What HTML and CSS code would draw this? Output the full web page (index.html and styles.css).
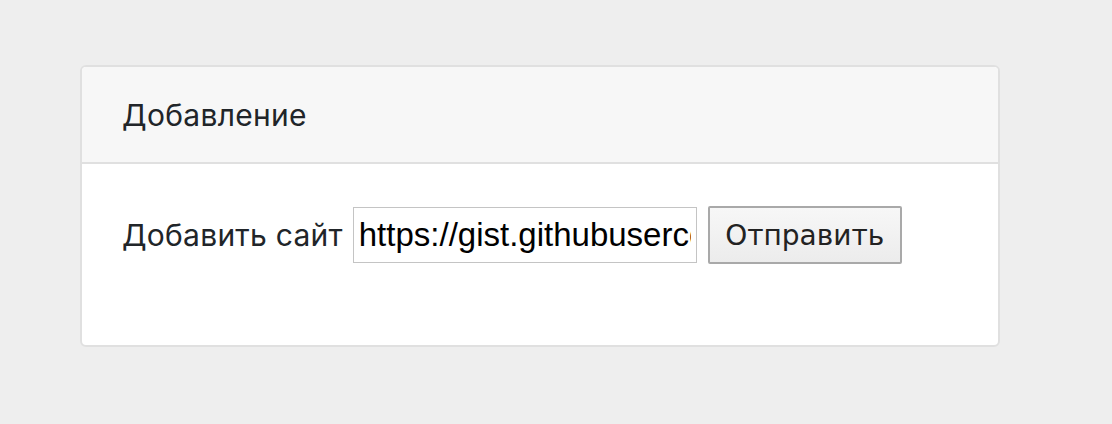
FILE: index.html
```html
<!DOCTYPE html>
<html lang="ru">
<head>
<meta charset="utf-8">
<link rel="stylesheet" href="styles.css">
</head>
<body>
<div class="page">
  <div class="card">
    <div class="card-header">Добавление</div>
    <div class="card-body">
      <form class="add-form">
        <label class="label" for="site">Добавить сайт</label>
        <input class="site-input" id="site" type="text" value="https://gist.githubusercontent.com/">
        <button class="submit" type="button">Отправить</button>
      </form>
    </div>
  </div>
</div>
</body>
</html>
```
FILE: styles.css
```css
html, body {
  margin: 0;
  padding: 0;
  background: #eeeeee;
}
.page {
  padding: 65px 0 0 80px;
}
.card {
  width: 920px;
  height: 282px;
  box-sizing: border-box;
  background: #fff;
  border: 2px solid #e0e0e0;
  border-radius: 6px;
  overflow: hidden;
  font-family: Inter, "Noto Sans", sans-serif;
  color: #212529;
}
.card-header {
  height: 97px;
  box-sizing: border-box;
  background: #f7f7f7;
  border-bottom: 2px solid #e0e0e0;
  padding: 0 0 0 40px;
  display: flex;
  align-items: center;
  font-size: 30px;
  letter-spacing: 0.3px;
}
.card-body {
  padding: 42px 40px;
}
.add-form {
  display: flex;
  align-items: center;
}
.label {
  font-size: 30px;
  letter-spacing: 0.25px;
  margin-right: 10px;
}
.site-input {
  width: 344px;
  height: 56px;
  box-sizing: border-box;
  border: 1px solid #c4c4c4;
  padding: 0 5px;
  font-family: "Liberation Sans", Arial, sans-serif;
  font-size: 33px;
  color: #000;
  outline: none;
  margin: 0 11px 0 0;
}
.submit {
  height: 58px;
  width: 194px;
  box-sizing: border-box;
  border: 2px solid #a9a9a9;
  border-radius: 2px;
  background: linear-gradient(#f7f7f7, #ececec);
  font-family: "DejaVu Sans", sans-serif;
  font-size: 28px;
  color: #222;
  padding: 0;
}
```
